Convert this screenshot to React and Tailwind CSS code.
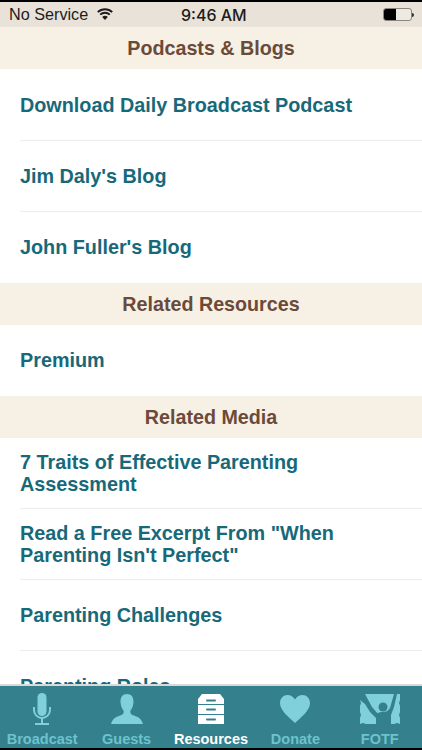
const Header = ({ title }) => (
  <div className="h-[42px] pt-[2px] bg-[#f7f0e4] flex items-center justify-center font-bold text-[#6b4a3a] text-[19.7px]">
    {title}
  </div>
);

const Row = ({ children, last }) => (
  <div className="h-[71px] bg-white flex items-center pl-5 pb-[2px] relative">
    <p className="text-[19.8px] leading-[22px] font-bold text-[#17697a] pr-10">{children}</p>
    {!last && <div className="absolute bottom-0 left-5 right-0 h-px bg-[#ececec]" />}
  </div>
);

const WifiIcon = () => (
  <svg width="16" height="12" viewBox="0 0 16 12" fill="none" stroke="#1c1c1c" strokeWidth="1.9">
    <path d="M.8 4.200a10.200 10.200 0 0 1 14.400 0" />
    <path d="M3.200 6.700a6.800 6.800 0 0 1 9.600 0" />
    <path d="M8 12 5.200 8.900a3.900 3.900 0 0 1 5.600 0z" fill="#1c1c1c" stroke="none" />
  </svg>
);

const MicIcon = () => (
  <svg width="18" height="32" viewBox="0 0 18 32" fill="#7fd0da">
    <rect x="4.500" y="0" width="9" height="23" rx="4.500" />
    <path d="M1 14v3a8 8 0 0 0 16 0v-3" fill="none" stroke="#7fd0da" strokeWidth="2" />
    <rect x="8" y="25" width="2" height="5" />
    <rect x="2" y="30" width="14" height="2" />
  </svg>
);

const GuestIcon = () => (
  <svg width="32" height="30" viewBox="0 0 32 30" fill="#7fd0da">
    <path d="M16 0c4.500 0 6.500 3 6.500 7.500 0 3.500-1.200 7-3 9-.5 2 0 3.500 2 4.500 4 1.800 8.500 2 10.500 9H0c2-7 6.500-7.200 10.500-9 2-1 2.500-2.500 2-4.500-1.800-2-3-5.500-3-9C9.500 3 11.500 0 16 0z" />
  </svg>
);

const DrawersIcon = () => (
  <svg width="26" height="30" viewBox="0 0 26 30" fill="#ffffff">
    <path d="M4 0h18l4 5v5H0V5z" />
    <rect x="8" y="5.500" width="10" height="2" rx="1" fill="#34808c" />
    <rect x="0" y="11" width="26" height="9" />
    <rect x="8" y="14.500" width="10" height="2" rx="1" fill="#34808c" />
    <rect x="0" y="21" width="26" height="9" />
    <rect x="8" y="24.500" width="10" height="2" rx="1" fill="#34808c" />
  </svg>
);

const HeartIcon = () => (
  <svg width="30" height="28" viewBox="0 0 30 28" fill="#7fd0da">
    <path d="M15 28C10 23 0 16 0 8c0-4.500 3.500-8 7.500-8 3.200 0 6 1.800 7.500 4.500C16.500 1.800 19.300 0 22.500 0 26.500 0 30 3.500 30 8c0 8-10 15-15 20z" />
  </svg>
);

const FotfIcon = () => (
  <svg width="40" height="30" viewBox="0 0 40 30">
    <path d="M0 0h40v6l-1 3 1 3v6l-1 3 1 3v6l-3-1-3 1H6l-3-1-3 1v-6l1-3-1-3v-6l1-3-1-3z" fill="#7fd0da" />
    <path d="M0 0h5l7 13 6 7-2 4-6-6-5-8-5-4z" fill="#34808c" />
    <path d="M16 30v-8c0-3 3-4 7-4 3 0 5-1 7-4l4-14h3l-3 13-3 8v9z" fill="#34808c" />
    <circle cx="23" cy="13" r="4.500" fill="#34808c" />
  </svg>
);

const tabs = [
  { label: 'Broadcast', Icon: MicIcon },
  { label: 'Guests', Icon: GuestIcon },
  { label: 'Resources', Icon: DrawersIcon, active: true },
  { label: 'Donate', Icon: HeartIcon },
  { label: 'FOTF', Icon: FotfIcon },
];

function App() {
  return (
    <div className="h-[750px] w-[422px] flex flex-col overflow-hidden bg-white font-['Liberation_Sans',Arial,sans-serif]">
      <div className="h-[27px] shrink-0 bg-[#e8e2d8] border-t-2 border-black flex items-center justify-between pl-[9px] pr-[8px] text-[16.2px] text-[#1c1c1c] relative">
        <div className="flex items-center gap-[9px]">
          <span>No Service</span>
          <WifiIcon />
        </div>
        <span className="absolute left-[181px] font-['Inter',sans-serif] font-medium text-[16px]">9:46 AM</span>
        <div className="flex items-center">
          <div className="w-[29px] h-[13px] border border-[#8a8680] rounded-[3px] bg-[#efeae1] overflow-hidden">
            <div className="w-[12px] h-full bg-black" />
          </div>
          <div className="w-[2px] h-[4px] bg-[#333] rounded-r-sm" />
        </div>
      </div>
      <div className="flex-1 overflow-hidden">
        <Header title="Podcasts & Blogs" />
        <div className="h-px bg-white" />
        <Row>Download Daily Broadcast Podcast</Row>
        <Row>Jim Daly's Blog</Row>
        <Row last>John Fuller's Blog</Row>
        <Header title="Related Resources" />
        <Row last>Premium</Row>
        <Header title="Related Media" />
        <Row>7 Traits of Effective Parenting Assessment</Row>
        <Row>Read a Free Excerpt From "When Parenting Isn't Perfect"</Row>
        <Row>Parenting Challenges</Row>
        <Row>Parenting Roles</Row>
      </div>
      <div className="h-[66px] shrink-0 bg-[#34808c] border-t-2 border-[#d9d9d9] border-b-2 border-b-black grid grid-cols-5 pt-[6px]">
        {tabs.map(({ label, Icon, active }) => (
          <div key={label} className="flex flex-col items-center justify-between">
            <div className="h-[34px] flex items-center justify-center"><Icon /></div>
            <span className={`text-[14.5px] leading-[17px] font-bold ${active ? 'text-white' : 'text-[#6cc3cf]'}`}>{label}</span>
          </div>
        ))}
      </div>
    </div>
  );
}

export default App;
